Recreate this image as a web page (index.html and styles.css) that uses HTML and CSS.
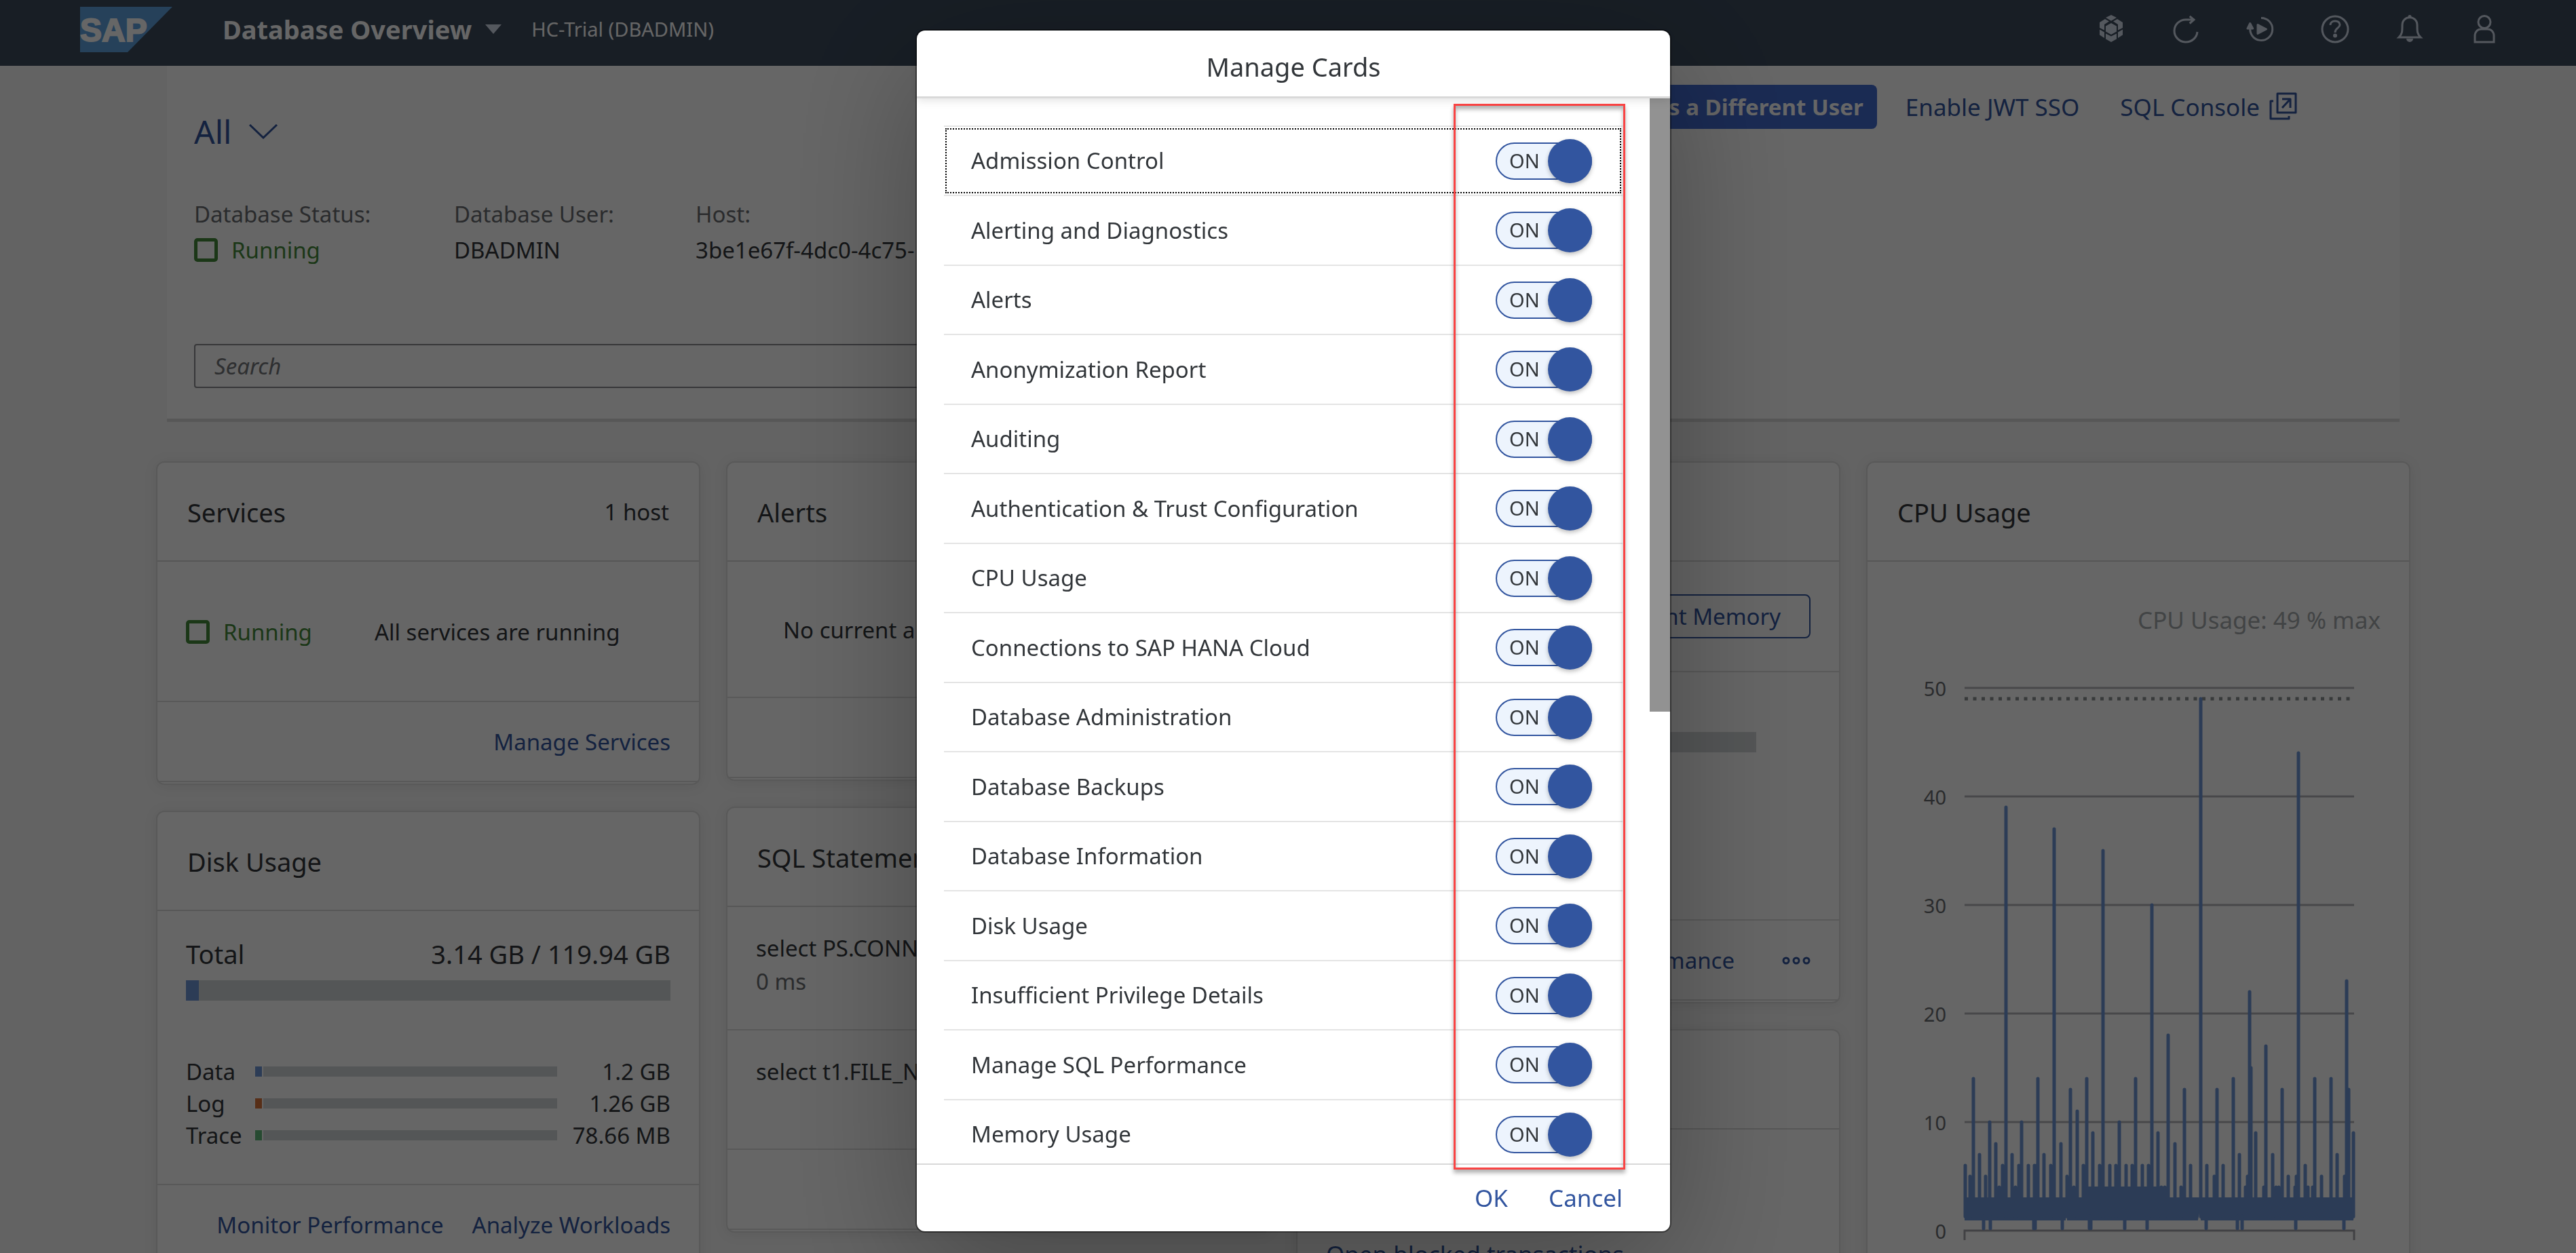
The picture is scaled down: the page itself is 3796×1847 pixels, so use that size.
FILE: index.html
```html
<!DOCTYPE html>
<html lang="en">
<head>
<meta charset="utf-8">
<title>Database Overview</title>
<link rel="stylesheet" href="styles.css">
</head>
<body>
<header class="shell">
  <svg class="logo" viewBox="0 0 136 67" role="img" aria-label="SAP">
    <polygon points="0,0 136,0 70,67 0,67" fill="#5fa3e0"/>
    <text x="0" y="51" font-size="48" class="logo-text">SAP</text>
  </svg>
  <button class="app-title">Database Overview
    <svg width="24" height="14" viewBox="0 0 24 14"><path d="M0 0H24L12 14Z" fill="#d3dcec"/></svg>
  </button>
  <span class="instance">HC-Trial (DBADMIN)</span>
  <nav class="shell-actions">
    <button aria-label="Cockpit"><svg class="icon" viewBox="0 0 44 44"><path fill="currentColor" d="M14 5 22 1 30 5 22 9.7ZM5 12 13 7 19 10.5 12 15V23.5L5 20ZM39 12 31 7 25 10.5 32 15V23.5L39 20ZM22 13 30 17.5V25.5L22 30 14 25.5V17.5ZM5 22.5 12 26.5V35L5 30.500ZM39 22.500 32 26.500V35L39 30.500ZM14 28.500 22 32.500 30 28.500V36.500L22 41 14 36.500Z"/></svg></button>
    <button aria-label="Refresh"><svg class="icon line" viewBox="0 0 44 44"><path d="M39 26A17 16.500 0 1 1 22 8H34M27.700 3 34 8 27.700 13.500"/></svg></button>
    <button aria-label="Auto refresh"><svg class="icon line" viewBox="0 0 44 44"><path d="M23 5.500A16.500 16.500 0 1 1 7 19"/><path class="solid" d="M3 21 6.700 13.500 10.700 21ZM18 15.500 30.500 22 18 28.500Z"/></svg></button>
    <button aria-label="Help"><svg class="icon line" viewBox="0 0 44 44"><circle cx="22" cy="22" r="19"/><path d="M15 16C15 8 29 8 29 15.500C29 20.500 22 20 22 27"/><circle class="dot" cx="22" cy="31.500" r="3"/></svg></button>
    <button aria-label="Notifications"><svg class="icon line" viewBox="0 0 44 44"><path d="M6 34C11 29 11 26 11 16C11 1 33 1 33 16C33 26 33 29 38 34Z"/><circle class="dot" cx="22" cy="3.500" r="2.500"/><path class="dot" d="M17 36a5 5 0 0 0 10 0z"/></svg></button>
    <button aria-label="User"><svg class="icon line" viewBox="0 0 44 44"><circle cx="22" cy="11.500" r="9"/><path d="M8 41V32C8 26 12 22 17 22H27C32 22 36 26 36 32V41Z"/></svg></button>
  </nav>
</header>

<main>
  <section class="hero">
    <div class="hero-top">
      <button class="variant">All
        <svg width="42" height="22" viewBox="0 0 42 22"><path d="M1 1 21 20 41 1" fill="none" stroke="currentColor" stroke-width="3"/></svg>
      </button>
      <div class="hero-actions">
        <button class="emphasized">Sign in as a Different User</button>
        <a href="#">Enable JWT SSO</a>
        <a href="#" class="console">SQL Console
          <svg width="42" height="42" viewBox="0 0 42 42"><path d="M12 2H39V30H12ZM6 13H2V39H29V35M19 23 31 10M19 10H31V23" fill="none" stroke="currentColor" stroke-width="3" stroke-linejoin="round"/></svg>
        </a>
      </div>
    </div>
    <dl class="facts">
      <div><dt>Database Status:</dt><dd class="running"><i></i>Running</dd></div>
      <div><dt>Database User:</dt><dd>DBADMIN</dd></div>
      <div><dt>Host:</dt><dd>3be1e67f-4dc0-4c75-</dd></div>
    </dl>
    <input class="search" type="search" placeholder="Search" aria-label="Search">
  </section>

  <div class="board">
    <div class="lane">
      <article class="card">
        <header><h2>Services</h2><span>1 host</span></header>
        <div class="body services"><span class="running"><i></i>Running</span><span>All services are running</span></div>
        <footer><a href="#">Manage Services</a></footer>
      </article>
      <article class="card">
        <header><h2>Disk Usage</h2></header>
        <div class="body disk">
          <div class="total"><span>Total</span><span>3.14 GB / 119.94 GB</span></div>
          <div class="bar"><b style="width:19px"></b></div>
          <div class="volumes">
            <span>Data</span><div class="bar thin"><b style="width:10px"></b></div><span>1.2 GB</span>
            <span>Log</span><div class="bar thin log"><b style="width:10px"></b></div><span>1.26 GB</span>
            <span>Trace</span><div class="bar thin trace"><b style="width:10px"></b></div><span>78.66 MB</span>
          </div>
        </div>
        <footer><a href="#">Monitor Performance</a><a href="#">Analyze Workloads</a></footer>
      </article>
    </div>
    <div class="lane">
      <article class="card">
        <header><h2>Alerts</h2></header>
        <div class="body alerts">No current alerts</div>
        <footer></footer>
      </article>
      <article class="card">
        <header><h2>SQL Statements</h2></header>
        <div class="body">
          <div class="statement"><p>select PS.CONNECTION</p><p class="muted">0 ms</p></div>
          <div class="statement"><p>select t1.FILE_NAME</p></div>
        </div>
        <footer></footer>
      </article>
    </div>
    <div class="lane">
      <article class="card">
        <header><h2>Memory Usage</h2></header>
        <div class="body memory">
          <div class="memory-tools"><button>Current Memory</button></div>
          <div class="memory-bar"><div class="bar"></div></div>
        </div>
        <footer class="wide"><a href="#">Monitor Performance</a>
          <button aria-label="More"><svg width="42" height="12" viewBox="0 0 42 12"><g fill="none" stroke="currentColor" stroke-width="3"><circle cx="6" cy="6" r="4"/><circle cx="21" cy="6" r="4"/><circle cx="36" cy="6" r="4"/></g></svg></button>
        </footer>
      </article>
      <article class="card">
        <header><h2>Sessions</h2></header>
        <div class="body sessions"><a href="#">Open blocked transactions</a></div>
      </article>
    </div>
    <div class="lane">
      <article class="card">
        <header><h2>CPU Usage</h2></header>
        <div class="body">
          <p class="chart-note">CPU Usage: 49 % max</p>
          <svg class="chart" viewBox="0 0 798 960" role="img" aria-label="CPU usage chart">
            <g class="grid"><path d="M143 76H717M143 236H717M143 396H717M143 556H717M143 716H717"/></g>
            <path class="axis" d="M143 890V876H717V890"/>
            <path class="limit" d="M143 92H711"/>
            <g class="ticks"><text x="116" y="88">50</text><text x="116" y="248">40</text><text x="116" y="408">30</text><text x="116" y="568">20</text><text x="116" y="728">10</text><text x="116" y="888">0</text></g>
            <g id="series"></g>
          </svg>
        </div>
      </article>
    </div>
  </div>
</main>

<div class="overlay">
  <section class="dialog" role="dialog" aria-modal="true" aria-labelledby="dialog-title">
    <h1 id="dialog-title">Manage Cards</h1>
    <div class="scroller">
      <ul>
        <li class="focused"><label>Admission Control<input type="checkbox" role="switch" checked><span class="switch">ON</span></label></li>
        <li><label>Alerting and Diagnostics<input type="checkbox" role="switch" checked><span class="switch">ON</span></label></li>
        <li><label>Alerts<input type="checkbox" role="switch" checked><span class="switch">ON</span></label></li>
        <li><label>Anonymization Report<input type="checkbox" role="switch" checked><span class="switch">ON</span></label></li>
        <li><label>Auditing<input type="checkbox" role="switch" checked><span class="switch">ON</span></label></li>
        <li><label>Authentication &amp; Trust Configuration<input type="checkbox" role="switch" checked><span class="switch">ON</span></label></li>
        <li><label>CPU Usage<input type="checkbox" role="switch" checked><span class="switch">ON</span></label></li>
        <li><label>Connections to SAP HANA Cloud<input type="checkbox" role="switch" checked><span class="switch">ON</span></label></li>
        <li><label>Database Administration<input type="checkbox" role="switch" checked><span class="switch">ON</span></label></li>
        <li><label>Database Backups<input type="checkbox" role="switch" checked><span class="switch">ON</span></label></li>
        <li><label>Database Information<input type="checkbox" role="switch" checked><span class="switch">ON</span></label></li>
        <li><label>Disk Usage<input type="checkbox" role="switch" checked><span class="switch">ON</span></label></li>
        <li><label>Insufficient Privilege Details<input type="checkbox" role="switch" checked><span class="switch">ON</span></label></li>
        <li><label>Manage SQL Performance<input type="checkbox" role="switch" checked><span class="switch">ON</span></label></li>
        <li><label>Memory Usage<input type="checkbox" role="switch" checked><span class="switch">ON</span></label></li>
      </ul>
      <div class="track"><div class="thumb"></div></div>
    </div>
    <footer><button>OK</button><button>Cancel</button></footer>
    <div class="callout"></div>
  </section>
</div>
<script src="chart.js"></script>
</body>
</html>
```
FILE: styles.css
```css
* { box-sizing: border-box; }
body, h1, h2, p, ul, dl, dd { margin: 0; padding: 0; }
body {
  height: 100vh;
  overflow: hidden;
  background: #f7f7f7;
  color: #32363a;
  font: 33px/44px "Noto Sans", sans-serif;
}
button {
  border: 0;
  padding: 0;
  background: none;
  color: #32559f;
  font: inherit;
}
a { color: #32559f; text-decoration: none; }
ul { list-style: none; }
svg { display: block; flex: none; }

/* shell bar */
.shell {
  display: flex;
  align-items: center;
  height: 97px;
  padding: 0 80px 11px 118px;
  background: #3c4b5d;
  color: #fff;
}
.logo { width: 136px; height: 67px; }
.logo-text {
  font-family: "Liberation Sans", sans-serif;
  font-weight: 700;
  fill: #fff;
  stroke: #fff;
  stroke-width: 2;
}
.app-title {
  display: flex;
  align-items: center;
  gap: 20px;
  margin-left: 74px;
  color: #fff;
  font-size: 38px;
  font-weight: 700;
}
.instance { margin-left: 44px; font-size: 29px; }
.shell-actions { display: flex; margin-left: auto; }
.shell-actions button {
  display: flex;
  justify-content: center;
  width: 110px;
  color: #d3dcec;
}
.icon { width: 44px; height: 44px; }
.line { fill: none; stroke: currentColor; stroke-width: 3; }
.solid { fill: currentColor; stroke-linejoin: round; }
.dot { fill: currentColor; stroke: none; }

/* page header */
.hero {
  height: 525px;
  margin: 0 260px 0 246px;
  padding: 28px 150px 0 40px;
  border-bottom: 5px solid #d9d9d9;
  background: #fff;
}
.hero-top { display: flex; justify-content: space-between; align-items: flex-start; }
.variant {
  display: flex;
  align-items: center;
  gap: 26px;
  margin-top: 36px;
  font-size: 48px;
  line-height: 66px;
}
.hero-actions { display: flex; align-items: center; gap: 42px; font-size: 35px; }
.hero-actions .console { display: flex; gap: 14px; margin-left: 18px; }
.emphasized {
  height: 65px;
  padding: 0 20px;
  border-radius: 8px;
  background: #426bd0;
  color: #fff;
  font-size: 33px;
  font-weight: 700;
}
.facts {
  display: grid;
  grid-template-columns: 383px 356px auto;
  margin-top: 62px;
  line-height: 53px;
}
.facts dt { color: #6a6d70; }
.running { display: flex; align-items: center; gap: 20px; color: #458a3a; }
.running i { width: 35px; height: 35px; border: 5px solid; border-radius: 5px; }
.search {
  display: block;
  width: 50%;
  height: 65px;
  margin-top: 112px;
  padding: 0 28px;
  border: 2px solid #89898f;
  border-radius: 4px;
  background: #fff;
  font: inherit;
}
.search::placeholder { color: #74777a; font-style: italic; opacity: 1; }

/* cards */
.board {
  display: grid;
  grid-template-columns: repeat(4, 1fr);
  gap: 38px;
  padding: 58px 244px 0 230px;
}
.lane { display: flex; flex-direction: column; gap: 38px; min-width: 0; }
.card {
  padding-bottom: 2px;
  border: 2px solid #dedede;
  border-radius: 12px;
  background: #fff;
  box-shadow: 0 2px 20px rgba(0, 0, 0, .08);
}
.card header, .card footer { display: flex; align-items: center; }
.card header {
  justify-content: space-between;
  height: 146px;
  padding: 2px 44px 0;
  border-bottom: 2px solid #d9d9d9;
}
.card h2 { font-size: 38px; font-weight: 400; }
.card footer {
  justify-content: flex-end;
  gap: 42px;
  height: 120px;
  padding: 2px 42px 0;
  border: solid #dedede;
  border-width: 2px 0;
}
.card .wide { gap: 70px; }
.services { display: flex; align-items: center; gap: 92px; height: 205px; padding: 2px 42px 0; }
.alerts { display: flex; align-items: center; height: 199px; padding: 2px 82px 0; }
.muted { color: #6a6d70; }

.disk { height: 402px; padding: 38px 42px 0; }
.total { display: flex; justify-content: space-between; font-size: 38px; line-height: 50px; }
.bar { height: 30px; background: #d3d7d9; }
.bar b { display: block; height: 100%; background: #6e96d7; }
.total + .bar { margin-top: 14px; }
.thin { height: 15px; }
.thin b { box-shadow: 2px 0 0 #fff; }
.log b { background: #d9743a; }
.trace b { background: #5fb87a; }
.volumes {
  display: grid;
  grid-template-columns: 102px 1fr 167px;
  grid-auto-rows: 47px;
  align-items: center;
  margin-top: 81px;
}
.volumes span:nth-child(3n) { text-align: right; }

.statement { height: 174px; padding: 36px 42px; line-height: 49px; }
.statement:first-child { height: 182px; border-bottom: 2px solid #dedede; }

.memory { height: 527px; }
.memory-tools {
  display: flex;
  justify-content: flex-end;
  height: 163px;
  padding: 48px 42px;
  border-bottom: 2px solid #dedede;
}
.memory-tools button {
  height: 65px;
  padding: 0 42px;
  border: 2px solid #32559f;
  border-radius: 8px;
}
.memory-bar { padding: 88px 122px 0 42px; }
.sessions { height: 240px; padding: 162px 42px; font-size: 35px; }

.chart-note { padding: 64px 42px 0; color: #a5aaac; font-size: 35px; text-align: right; }
.chart { width: 100%; margin-top: 2px; }
.grid path, .axis { fill: none; stroke: #b4b4b9; stroke-width: 3; }
.axis { stroke: #a4a4aa; }
.limit { stroke: #8c9194; stroke-width: 5; stroke-dasharray: 5 7.500; }
.ticks { fill: #6a6d70; font-size: 29px; text-anchor: end; }
#series { fill: #6e96d7; stroke: #6e96d7; stroke-width: 5; stroke-linecap: round; }

/* dialog */
.overlay {
  position: fixed;
  inset: 0;
  display: flex;
  justify-content: center;
  padding: 45px 0 32px 16px;
  background: rgba(0, 0, 0, .6);
}
.dialog {
  position: relative;
  display: flex;
  flex-direction: column;
  width: 1110px;
  border-radius: 12px;
  background: #fff;
  box-shadow: 0 0 0 2px rgba(0, 0, 0, .42), 0 50px 200px rgba(0, 0, 0, .3);
}
.dialog h1 {
  position: relative;
  height: 100px;
  border-bottom: 3px solid #d9d9d9;
  box-shadow: 0 4px 12px rgba(0, 0, 0, .1);
  font-size: 38px;
  font-weight: 400;
  line-height: 106px;
  text-align: center;
}
.scroller { display: flex; flex: 1; min-height: 0; overflow: hidden; }
.scroller ul { flex: 1; padding: 40px 40px 0; }
.scroller li { height: 102px; border-bottom: 2px solid #e4e4e4; }
.scroller li:nth-child(even) { height: 103px; }
.scroller li:first-child { height: 104px; border-top: 2px solid #e4e4e4; }
.scroller label {
  display: flex;
  justify-content: space-between;
  align-items: center;
  height: 100%;
  padding: 0 45px 0 40px;
}
.focused label { outline: 2px dotted #000; outline-offset: -4px; }
.scroller input { position: absolute; opacity: 0; }
.switch {
  position: relative;
  width: 142px;
  height: 55px;
  padding-left: 18px;
  border: 2px solid #32559f;
  border-radius: 28px;
  background: #edf4fd;
  font-size: 29px;
  line-height: 50px;
}
.switch::after {
  content: "";
  position: absolute;
  top: -7px;
  right: -2px;
  width: 65px;
  height: 65px;
  border-radius: 50%;
  background: #32559f;
  box-shadow: 0 3px 6px rgba(0, 0, 0, .25);
}
.track { width: 30px; }
.thumb { height: 904px; background: #929292; }
.dialog footer {
  display: flex;
  justify-content: flex-end;
  gap: 60px;
  height: 100px;
  padding-right: 70px;
  border-top: 2px solid #d9d9d9;
  font-size: 35px;
}
.callout {
  position: absolute;
  inset: 108px 66px 91px 791px;
  border: 3px solid #f94444;
  box-shadow: 0 5px 6px rgba(0, 0, 0, .3), inset 0 5px 6px rgba(0, 0, 0, .3);
  pointer-events: none;
}
```
FILE: chart.js
```js
// Samples as [offset on the time axis, CPU percentage].
const peaks = [[1,6],[8,5],[13,14],[22,7],[31,5],[37,10],[46,8],[51,4],[56,6],[61,39],[70,7],[75,4],[80,6],[84,10],[94,6],[103,6],[106,6],[108,14],[117,7],[127,6],[132,37],[142,8],[151,5],[156,13],[161,4],[166,11],[175,6],[180,14],[189,9],[199,6],[204,35],[214,6],[223,6],[228,10],[238,6],[247,6],[252,14],[262,6],[271,6],[276,30],[285,9],[290,4],[295,4],[300,18],[310,8],[319,4],[324,13],[333,6],[348,49],[357,6],[368,5],[372,13],[381,6],[396,14],[405,7],[414,4],[417,5],[420,22],[422,15],[429,9],[441,4],[444,17],[454,7],[459,4],[463,4],[468,13],[477,5],[487,4],[489,5],[492,44],[502,6],[506,4],[513,4],[516,14],[526,5],[540,14],[549,7],[560,5],[563,23],[566,13],[573,9]];
const dips = [28, 38, 102, 104, 144, 184, 186, 236, 269, 356, 402, 409, 488, 559];
const left = 143, zero = 876, unit = 16;
const line = (x, from, to) => `M${left + x} ${zero - unit * from}V${zero - unit * to}`;
const d = peaks.map(([x, v]) => line(x, 1.3, v)).join("") + dips.map(x => line(x, 1.3, 0.2)).join("");
document.getElementById("series").innerHTML =
  `<path stroke-width="2" d="M144 828H717V846L715 860H492L489 845L486 860H295L293 845L291 860H144ZM317 812H441V828H317Z"/><path fill="none" d="${d}"/>`;
```
